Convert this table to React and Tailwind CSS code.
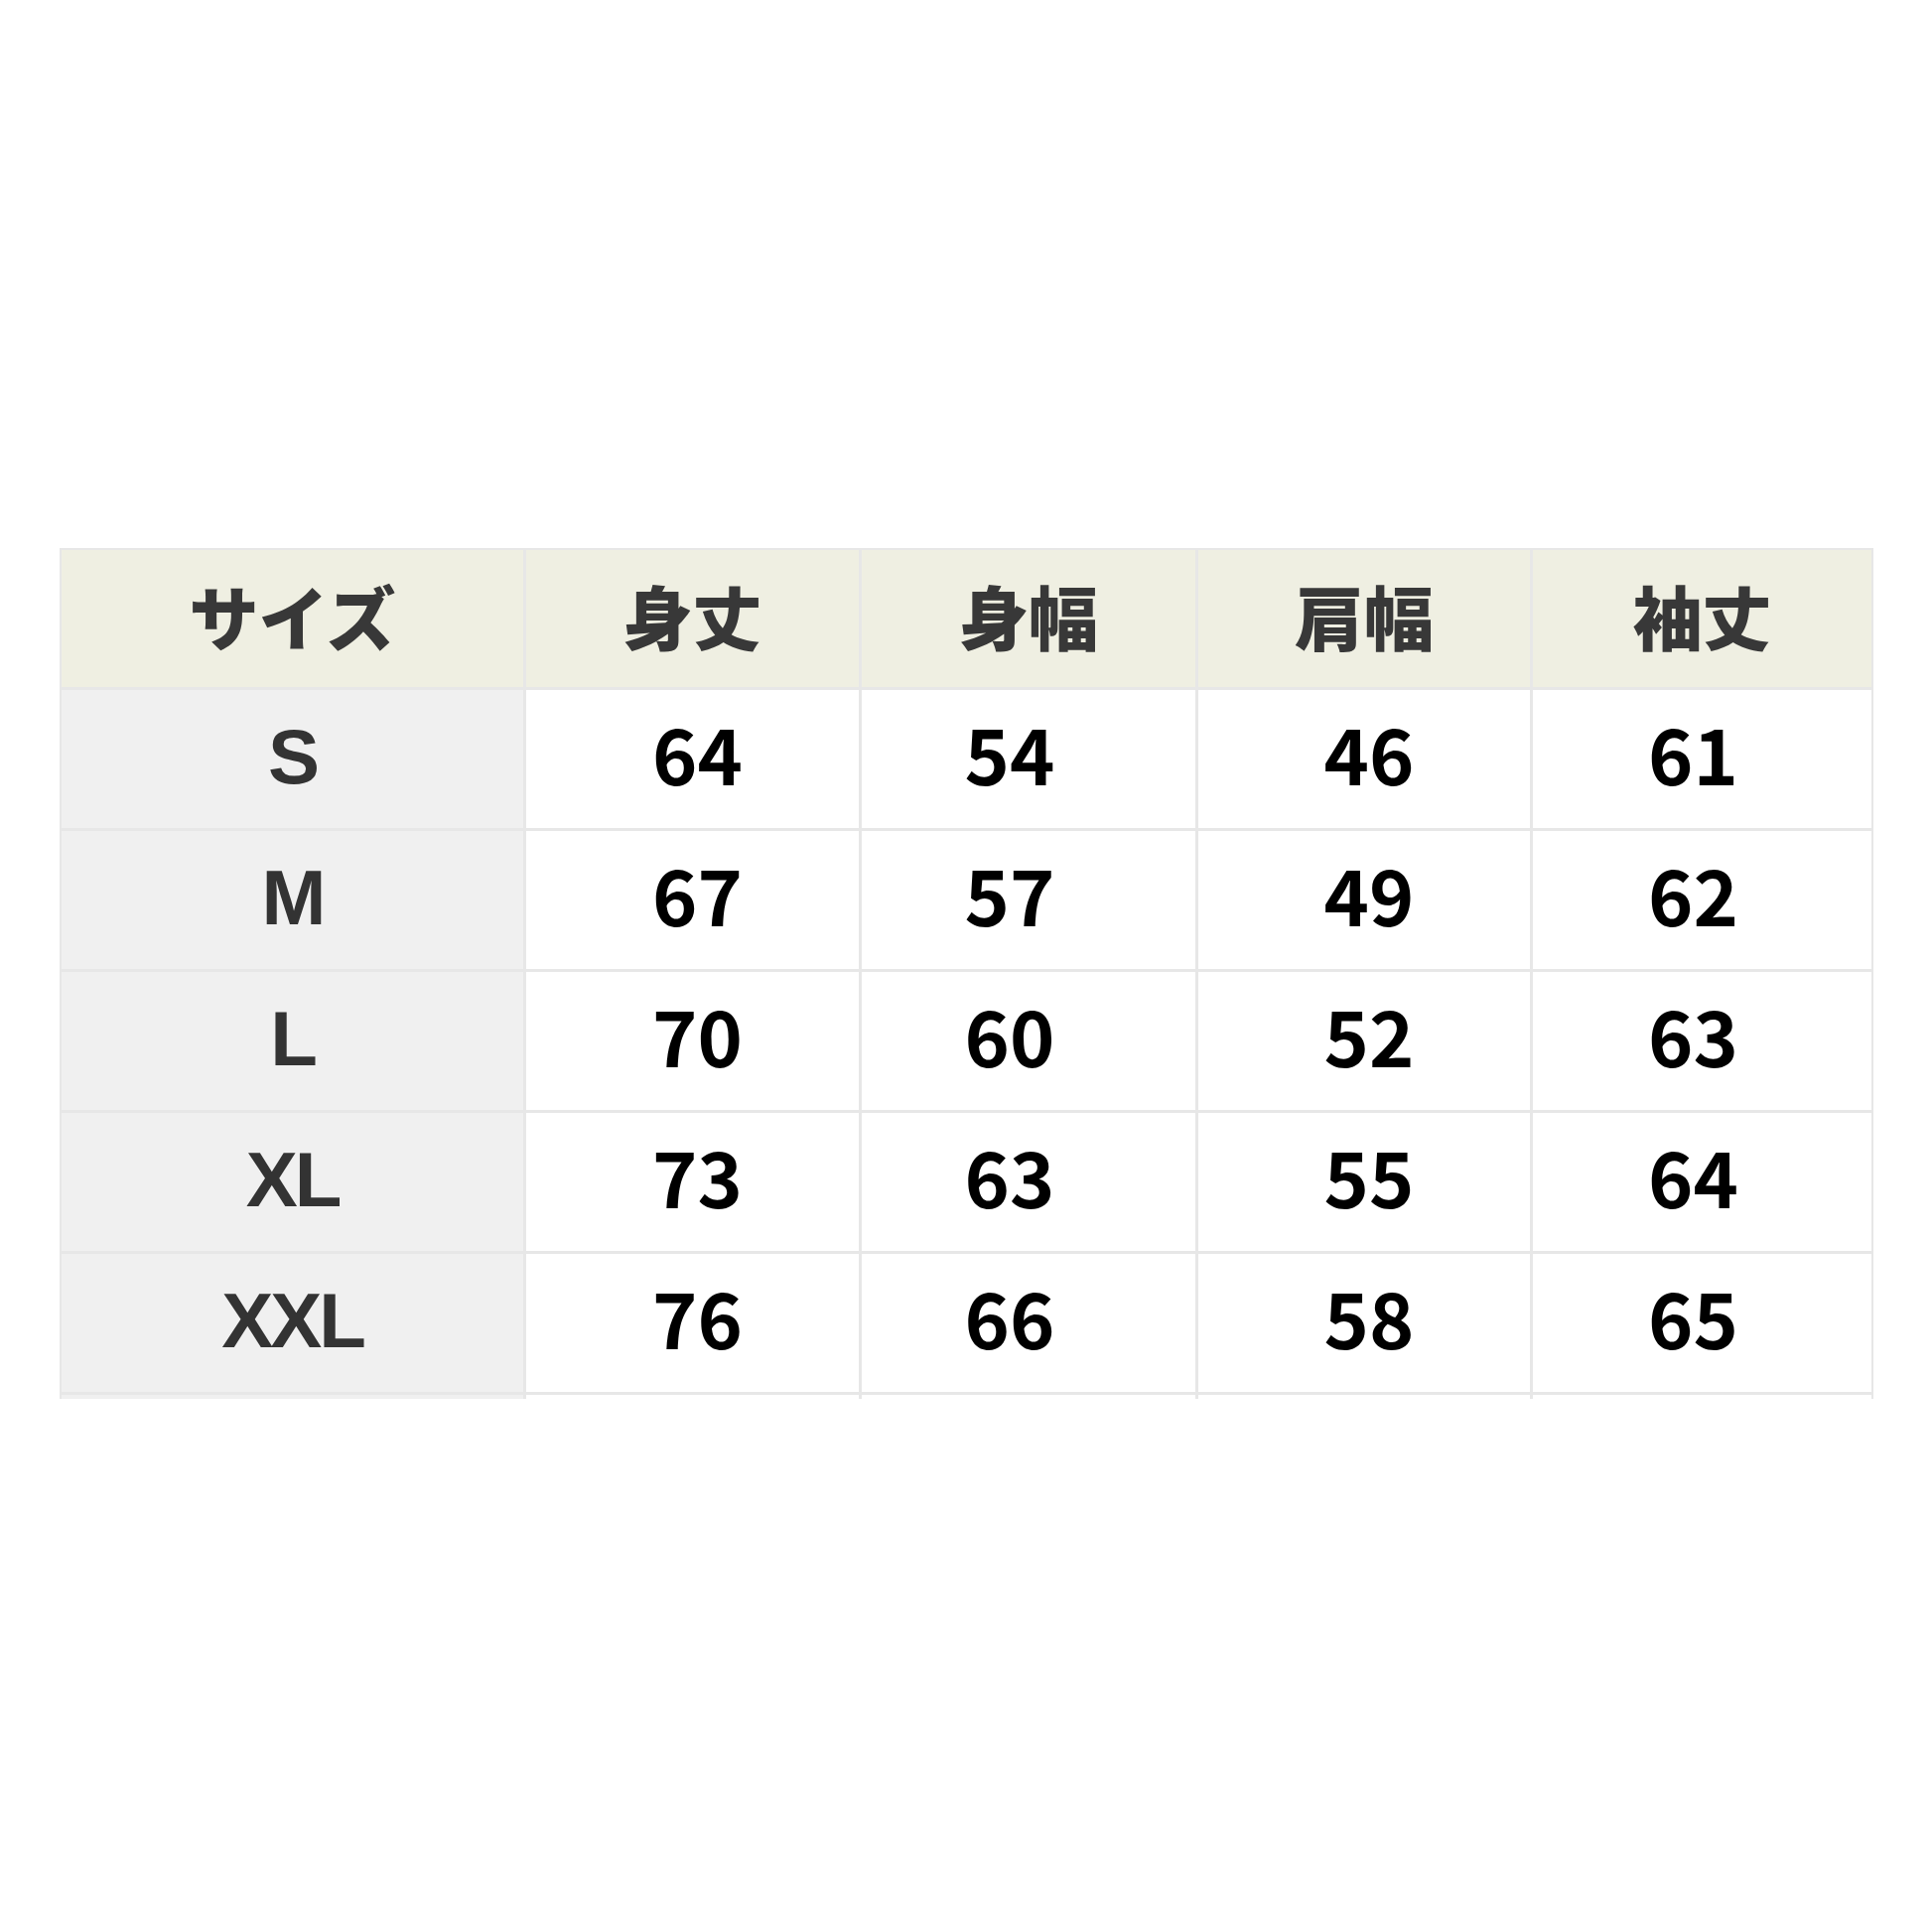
const HEADERS = ["サイズ", "身丈", "身幅", "肩幅", "袖丈"]

const ROWS = [
  { size: "S", values: [64, 54, 46, 61] },
  { size: "M", values: [67, 57, 49, 62] },
  { size: "L", values: [70, 60, 52, 63] },
  { size: "XL", values: [73, 63, 55, 64] },
  { size: "XXL", values: [76, 66, 58, 65] },
]

// numbers in the source aren't perfectly centred per column
const NUM_PAD = ["pl-[10px]", "pr-[38px]", "pl-[10px]", "pr-[18px]"]

const jp = { fontFamily: '"Noto Sans CJK JP", "Noto Sans", sans-serif' }
const latin = { fontFamily: '"Liberation Sans", Arial, sans-serif' }

export default function App() {
  return (
    <div className="w-[1946px] h-[1946px] bg-white pt-[552px] pl-[60px]">
      <div className="w-[1827px] h-[857px] overflow-hidden bg-[#e7e7e7] pt-[2px] px-[2px]">
        <div className="grid grid-cols-[465px_335px_336px_334px_341px] grid-rows-[138px_repeat(5,139px)_20px] gap-[3px]">
          {HEADERS.map((h) => (
            <div
              key={h}
              style={jp}
              className="bg-[#efefe2] flex items-center justify-center pb-[6px] text-[70px] font-black text-[#383838] leading-none"
            >
              {h}
            </div>
          ))}
          {ROWS.map((r) => (
            <Row key={r.size} row={r} />
          ))}
          <div className="bg-[#f0f0f0]" />
          <div className="bg-white" />
          <div className="bg-white" />
          <div className="bg-white" />
          <div className="bg-white" />
        </div>
      </div>
    </div>
  )
}

function Row({ row }) {
  return (
    <>
      <div
        style={latin}
        className="bg-[#f0f0f0] flex items-center justify-center pb-[5px] text-[78px] font-bold text-[#333] tracking-[-3px] leading-none"
      >
        {row.size}
      </div>
      {row.values.map((v, i) => (
        <div
          key={i}
          style={jp}
          className={`bg-white flex items-center justify-center pb-[14px] text-[77px] font-bold text-black leading-none ${NUM_PAD[i]}`}
        >
          {v}
        </div>
      ))}
    </>
  )
}
